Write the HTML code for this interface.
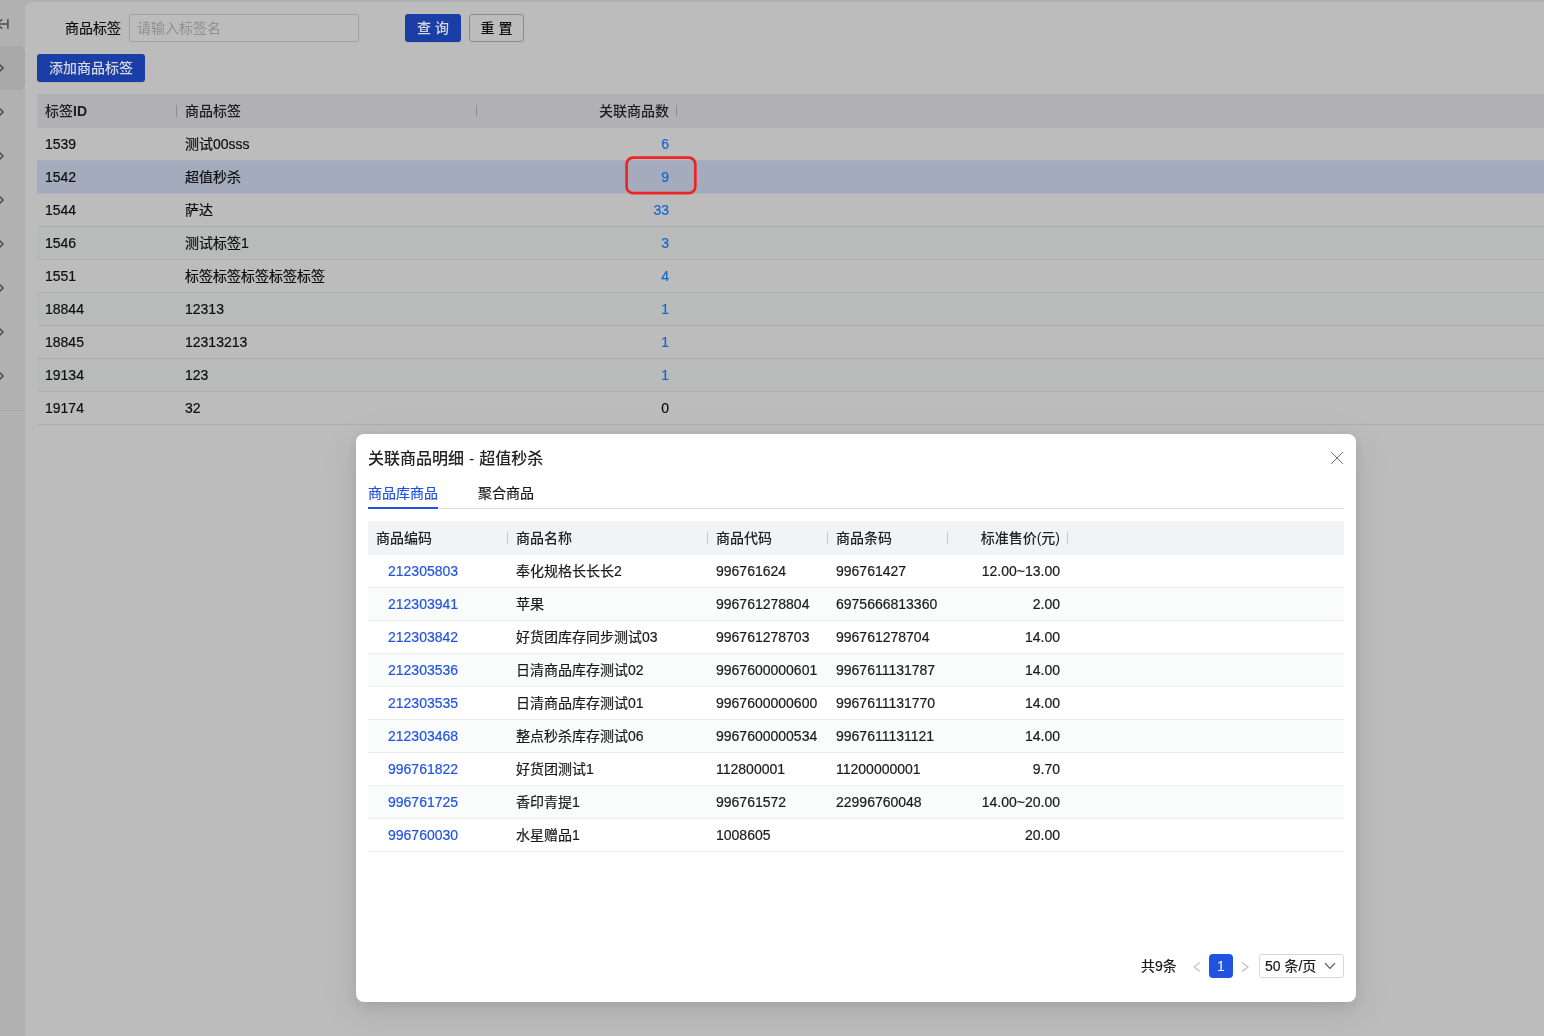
<!DOCTYPE html>
<html lang="zh-CN">
<head>
<meta charset="utf-8">
<title>商品标签</title>
<style>
*{box-sizing:border-box;margin:0;padding:0}
html,body{width:1544px;height:1036px;overflow:hidden}
body{position:relative;background:#b1b1b1;font-family:"Liberation Sans","Noto Sans CJK SC",sans-serif;font-size:14px;color:#0e0e0e;-webkit-font-smoothing:antialiased;-webkit-text-stroke:.2px}
.abs{position:absolute}
#wrap{position:absolute;left:0;top:0;width:1544px;height:1036px;will-change:transform}
/* sidebar */
#side{position:absolute;left:0;top:0;width:25px;height:1036px;background:#b1b1b1}
#side .act{position:absolute;left:0;top:46px;width:25px;height:44px;background:#a8a8a8;border-radius:0 6px 6px 0}
#side .line{position:absolute;left:0;top:410px;width:25px;height:1px;background:#a9a9a9}
#side svg{position:absolute;left:0}
/* content */
#main{position:absolute;left:25px;top:2px;width:1519px;height:1034px;background:#bcbcbc;border-radius:7px 0 0 0}
.lbl{position:absolute;left:65px;top:14px;height:28px;line-height:28px;font-size:14px;color:#101010}
.inp{-webkit-text-stroke:0;position:absolute;left:129px;top:14px;width:230px;height:28px;border:1px solid #a0a0a0;border-radius:3px;line-height:26px;padding-left:7px;color:#8f8f8f;font-size:14px}
.btn{-webkit-text-stroke:0;position:absolute;height:28px;line-height:28px;text-align:center;border-radius:3px;font-size:14px}
.btn.p{background:#1a3ea6;color:#d6d8de;font-weight:500;box-shadow:0 1px 1px rgba(0,0,0,.06)}
.btn.d{border:1px solid #8a8a8a;line-height:26px;color:#101010;font-weight:500}
/* grid */
.grid{position:absolute}
.grid .hd{position:absolute;left:0;top:0;height:34px;width:100%;font-weight:500;-webkit-text-stroke:0}
.grid .r{position:absolute;left:0;height:33px;width:100%;border-bottom:1px solid}
.grid .c{position:absolute;top:0;height:100%;line-height:33px;padding:0 8px;white-space:nowrap;overflow:hidden}
.grid .hd .c{line-height:34px}
.grid .hd .c i{position:absolute;right:0;top:11px;width:1px;height:12px}
.rt{text-align:right}
#g1{left:37px;top:94px;width:1507px;height:331px}
#g1 .hd{background:#b1b1b3;color:#1e1e1e}
#g1 .hd .c i{background:#8b8e99}
#g1 .r{border-color:#adaeae;background:#bcbcbc}
#g1 .r.e{background:#b9bbbb}
#g1 .r.s{background:#a3abbd;border-color:#afb3bc}
#g1 .c1{left:0;width:140px}#g1 .c2{left:140px;width:300px}#g1 .c3{left:440px;width:200px}
#g1 a{color:#1268cf}
/* modal */
#modal{position:absolute;left:356px;top:434px;width:1000px;height:568px;background:#fff;border-radius:8px;box-shadow:0 10px 36px 4px rgba(0,0,0,.07),0 4px 12px rgba(0,0,0,.08);color:#1a1a1a}
#modal .ttl{position:absolute;left:12px;top:13px;height:24px;line-height:24px;font-size:16px;font-weight:500;color:#222;word-spacing:.5px;-webkit-text-stroke:0}
#modal .x{position:absolute;left:975px;top:18px}
#modal .tabs{position:absolute;left:12px;top:44px;width:976px;height:31px;border-bottom:1px solid #dcdee0}
#modal .tab{position:absolute;top:0;height:30px;line-height:30px;font-size:14px}
#modal .tab.on{color:#2253e0}
#modal .tab.on:after{content:"";position:absolute;left:0;right:0;bottom:-1px;height:2px;background:#2253e0}
#g2{left:12px;top:87px;width:976px;height:331px}
#g2 .hd{background:#f2f3f5;color:#222}
#g2 .hd .c i{background:#c5c8d0}
#g2 .r{border-color:#e9e9ea;background:#fff}
#g2 .r.e{background:#fafbfb}
#g2 .c1{left:0;width:140px}#g2 .c2{left:140px;width:200px}#g2 .c3{left:340px;width:120px}#g2 .c4{left:460px;width:120px}#g2 .c5{left:580px;width:120px}
#g2 .r .c1{padding-left:20px}
#g2 a{color:#2253e0}
.pg{position:absolute;top:520px;height:24px;line-height:24px;font-size:14px;color:#1a1a1a}
#red{position:absolute;left:624px;top:155px}
</style>
</head>
<body>
<div id="wrap">
<div id="side">
  <svg style="top:16px" width="12" height="16" viewBox="0 16 12 16"><path d="M-3 24H7.9M7.9 19.1V28.9M2.3 19.2L-3 24L2.3 28.8" fill="none" stroke="#505050" stroke-width="1.5"/></svg>
  <div class="act"></div>
  <svg style="top:62px" width="6" height="12" viewBox="0 0 6 12"><path d="M-1 2L3 6L-1 10" fill="none" stroke="#484848" stroke-width="1.5"/></svg>
  <svg style="top:106px" width="6" height="12" viewBox="0 0 6 12"><path d="M-1 2L3 6L-1 10" fill="none" stroke="#484848" stroke-width="1.5"/></svg>
  <svg style="top:150px" width="6" height="12" viewBox="0 0 6 12"><path d="M-1 2L3 6L-1 10" fill="none" stroke="#484848" stroke-width="1.5"/></svg>
  <svg style="top:194px" width="6" height="12" viewBox="0 0 6 12"><path d="M-1 2L3 6L-1 10" fill="none" stroke="#484848" stroke-width="1.5"/></svg>
  <svg style="top:238px" width="6" height="12" viewBox="0 0 6 12"><path d="M-1 2L3 6L-1 10" fill="none" stroke="#484848" stroke-width="1.5"/></svg>
  <svg style="top:282px" width="6" height="12" viewBox="0 0 6 12"><path d="M-1 2L3 6L-1 10" fill="none" stroke="#484848" stroke-width="1.5"/></svg>
  <svg style="top:326px" width="6" height="12" viewBox="0 0 6 12"><path d="M-1 2L3 6L-1 10" fill="none" stroke="#484848" stroke-width="1.5"/></svg>
  <svg style="top:370px" width="6" height="12" viewBox="0 0 6 12"><path d="M-1 2L3 6L-1 10" fill="none" stroke="#484848" stroke-width="1.5"/></svg>
  <div class="line"></div>
</div>
<div id="main"></div>

<div class="lbl">商品标签</div>
<div class="inp">请输入标签名</div>
<div class="btn p" style="left:405px;top:14px;width:56px">查 询</div>
<div class="btn d" style="left:469px;top:14px;width:55px">重 置</div>
<div class="btn p" style="left:37px;top:54px;width:108px">添加商品标签</div>

<div class="grid" id="g1">
  <div class="hd"><div class="c c1">标签<b>ID</b><i></i></div><div class="c c2">商品标签<i></i></div><div class="c c3 rt">关联商品数<i></i></div></div>
  <div class="r" style="top:34px;border-color:#a6adbd"><div class="c c1">1539</div><div class="c c2">测试00sss</div><div class="c c3 rt"><a>6</a></div></div>
  <div class="r s" style="top:67px"><div class="c c1">1542</div><div class="c c2">超值秒杀</div><div class="c c3 rt"><a>9</a></div></div>
  <div class="r" style="top:100px"><div class="c c1">1544</div><div class="c c2">萨达</div><div class="c c3 rt"><a>33</a></div></div>
  <div class="r e" style="top:133px"><div class="c c1">1546</div><div class="c c2">测试标签1</div><div class="c c3 rt"><a>3</a></div></div>
  <div class="r" style="top:166px"><div class="c c1">1551</div><div class="c c2">标签标签标签标签标签</div><div class="c c3 rt"><a>4</a></div></div>
  <div class="r e" style="top:199px"><div class="c c1">18844</div><div class="c c2">12313</div><div class="c c3 rt"><a>1</a></div></div>
  <div class="r" style="top:232px"><div class="c c1">18845</div><div class="c c2">12313213</div><div class="c c3 rt"><a>1</a></div></div>
  <div class="r e" style="top:265px"><div class="c c1">19134</div><div class="c c2">123</div><div class="c c3 rt"><a>1</a></div></div>
  <div class="r" style="top:298px"><div class="c c1">19174</div><div class="c c2">32</div><div class="c c3 rt">0</div></div>
</div>

<div id="modal">
  <div class="ttl">关联商品明细 - 超值秒杀</div>
  <svg class="x" width="13" height="13" viewBox="0 0 13 13"><path d="M0.2 0.1L12 11.9M12 0.1L0.2 11.9" fill="none" stroke="#666" stroke-width="1"/></svg>
  <div class="tabs"><div class="tab on" style="left:0">商品库商品</div><div class="tab" style="left:110px">聚合商品</div></div>
  <div class="grid" id="g2">
    <div class="hd"><div class="c c1">商品编码<i></i></div><div class="c c2">商品名称<i></i></div><div class="c c3">商品代码<i></i></div><div class="c c4">商品条码<i></i></div><div class="c c5 rt">标准售价(元)<i></i></div></div>
    <div class="r" style="top:34px"><div class="c c1"><a>212305803</a></div><div class="c c2">奉化规格长长长2</div><div class="c c3">996761624</div><div class="c c4">996761427</div><div class="c c5 rt">12.00~13.00</div></div>
    <div class="r e" style="top:67px"><div class="c c1"><a>212303941</a></div><div class="c c2">苹果</div><div class="c c3">996761278804</div><div class="c c4">6975666813360</div><div class="c c5 rt">2.00</div></div>
    <div class="r" style="top:100px"><div class="c c1"><a>212303842</a></div><div class="c c2">好货团库存同步测试03</div><div class="c c3">996761278703</div><div class="c c4">996761278704</div><div class="c c5 rt">14.00</div></div>
    <div class="r e" style="top:133px"><div class="c c1"><a>212303536</a></div><div class="c c2">日清商品库存测试02</div><div class="c c3">9967600000601</div><div class="c c4">9967611131787</div><div class="c c5 rt">14.00</div></div>
    <div class="r" style="top:166px"><div class="c c1"><a>212303535</a></div><div class="c c2">日清商品库存测试01</div><div class="c c3">9967600000600</div><div class="c c4">9967611131770</div><div class="c c5 rt">14.00</div></div>
    <div class="r e" style="top:199px"><div class="c c1"><a>212303468</a></div><div class="c c2">整点秒杀库存测试06</div><div class="c c3">9967600000534</div><div class="c c4">9967611131121</div><div class="c c5 rt">14.00</div></div>
    <div class="r" style="top:232px"><div class="c c1"><a>996761822</a></div><div class="c c2">好货团测试1</div><div class="c c3">112800001</div><div class="c c4">11200000001</div><div class="c c5 rt">9.70</div></div>
    <div class="r e" style="top:265px"><div class="c c1"><a>996761725</a></div><div class="c c2">香印青提1</div><div class="c c3">996761572</div><div class="c c4">22996760048</div><div class="c c5 rt">14.00~20.00</div></div>
    <div class="r" style="top:298px"><div class="c c1"><a>996760030</a></div><div class="c c2">水星赠品1</div><div class="c c3">1008605</div><div class="c c4"></div><div class="c c5 rt">20.00</div></div>
  </div>
  <div class="pg" style="left:785px">共9条</div>
  <svg class="abs" style="left:836px;top:527px" width="10" height="12" viewBox="0 0 10 12"><path d="M7.8 1.5L2.2 6L7.8 10.5" fill="none" stroke="#bdbfc4" stroke-width="1.2"/></svg>
  <div class="pg" style="left:853px;width:24px;text-align:center;background:#2253e0;color:#fff;border-radius:4px;-webkit-text-stroke:0">1</div>
  <svg class="abs" style="left:884px;top:527px" width="10" height="12" viewBox="0 0 10 12"><path d="M2.1 1.5L7.9 6L2.1 10.5" fill="none" stroke="#bdbfc4" stroke-width="1.2"/></svg>
  <div class="pg" style="left:903px;width:85px;border:1px solid #d5d7db;border-radius:3px;line-height:22px;padding-left:5px">50 条/页</div>
  <svg class="abs" style="left:968px;top:528px" width="12" height="8" viewBox="0 0 12 8"><path d="M1 1.2L6 6.4L11 1.2" fill="none" stroke="#555" stroke-width="1.2"/></svg>
</div>
<svg id="red" width="80" height="46" viewBox="0 0 80 46"><rect x="2.6" y="2.6" width="68.7" height="35.6" rx="6.5" ry="6.5" fill="none" stroke="#ee2424" stroke-width="2.7"/></svg>
</div>
</body>
</html>
